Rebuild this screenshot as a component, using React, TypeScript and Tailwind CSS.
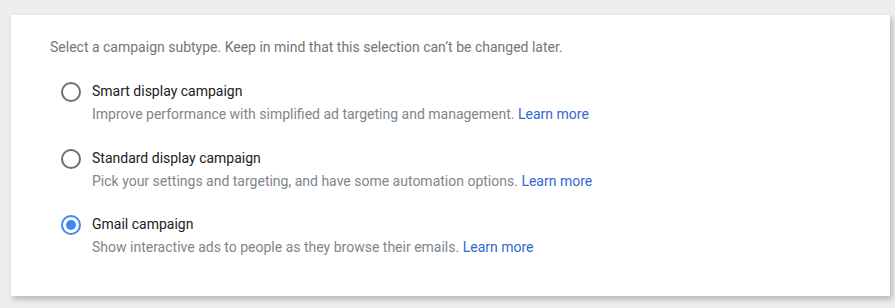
const options = [
  {
    title: 'Smart display campaign',
    desc: 'Improve performance with simplified ad targeting and management.',
    selected: false,
  },
  {
    title: 'Standard display campaign',
    desc: 'Pick your settings and targeting, and have some automation options.',
    selected: false,
  },
  {
    title: 'Gmail campaign',
    desc: 'Show interactive ads to people as they browse their emails.',
    selected: true,
  },
];

function Radio({ selected }: { selected: boolean }) {
  return (
    <div
      className={`w-[20px] h-[20px] rounded-full border-2 flex items-center justify-center shrink-0 ${
        selected ? 'border-[#4285f4]' : 'border-[#6e6e6e]'
      }`}
    >
      {selected && <div className="w-[10px] h-[10px] rounded-full bg-[#4285f4]" />}
    </div>
  );
}

export default function App() {
  return (
    <div className="w-[895px] h-[308px] bg-[#eeeef0] pt-[15px] pl-[11px] font-['Roboto',sans-serif]">
      <div className="w-[879px] h-[281px] bg-white shadow-[2px_3px_6px_rgba(0,0,0,0.25)] pt-[23px] pl-[39px]">
        <p className="text-[14px] leading-[18px] text-[#757575]">
          Select a campaign subtype. Keep in mind that this selection can’t be changed later.
        </p>
        <div className="mt-[25px] flex flex-col gap-[23.5px]">
          {options.map((o) => (
            <div key={o.title} className="flex items-start gap-[11px] pl-[11px]">
              <div className="pt-[1px]">
                <Radio selected={o.selected} />
              </div>
              <div>
                <div className="text-[14px] leading-[20px] text-[#202124]">{o.title}</div>
                <div className="text-[14px] leading-[20px] text-[#80868b] mt-[3px]">
                  {o.desc} <span className="text-[#3367d6]">Learn more</span>
                </div>
              </div>
            </div>
          ))}
        </div>
      </div>
    </div>
  );
}
